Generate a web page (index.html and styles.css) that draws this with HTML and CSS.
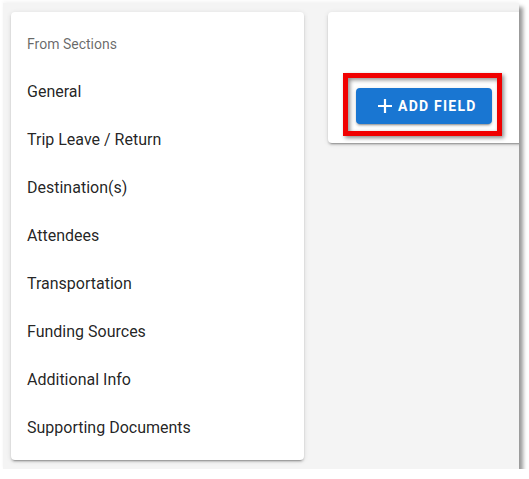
FILE: index.html
```html
<!DOCTYPE html>
<html>
<head>
<meta charset="utf-8">
<link rel="stylesheet" href="styles.css">
</head>
<body>
<div class="frame">
  <div class="card list-card">
    <div class="subheader">From Sections</div>
    <div class="item">General</div>
    <div class="item">Trip Leave / Return</div>
    <div class="item">Destination(s)</div>
    <div class="item">Attendees</div>
    <div class="item">Transportation</div>
    <div class="item">Funding Sources</div>
    <div class="item">Additional Info</div>
    <div class="item">Supporting Documents</div>
  </div>
  <div class="card action-card">
    <div class="highlight">
      <button class="btn">
        <svg class="plus" viewBox="0 0 16 16" width="16" height="16"><path d="M8 1v14M1 8h14" stroke="#fff" stroke-width="2.2" fill="none"/></svg>
        <span>Add Field</span>
      </button>
    </div>
  </div>
</div>
</body>
</html>
```
FILE: styles.css
```css
html, body {
  margin: 0;
  padding: 0;
  background: #ffffff;
}
body {
  padding: 3px 0 0 3px;
  font-family: Roboto, "Liberation Sans", sans-serif;
}
.frame {
  width: 508px;
  height: 457px;
  background: #f4f4f4;
  padding: 9px 0 0 8px;
  display: flex;
  align-items: flex-start;
  gap: 24px;
  overflow: hidden;
  box-shadow: 4px 4px 4px rgba(0,0,0,0.4), 0 -2px 3px rgba(0,0,0,0.04);
}
.card {
  background: #fff;
  border-radius: 4px;
  box-shadow: 0 3px 1px -2px rgba(0,0,0,.2), 0 2px 2px 0 rgba(0,0,0,.14), 0 1px 5px 0 rgba(0,0,0,.12);
}
.list-card {
  width: 293px;
  flex: none;
  padding: 8px 0;
}
.subheader {
  height: 48px;
  line-height: 48px;
  padding-left: 16px;
  font-size: 14px;
  color: rgba(0,0,0,.6);
}
.item {
  height: 48px;
  line-height: 48px;
  padding-left: 16px;
  font-size: 16px;
  color: rgba(0,0,0,.87);
}
.action-card {
  flex: none;
  width: 220px;
  padding: 61px 0 7px 15px;
  border-radius: 4px 0 0 4px;
}
.highlight {
  display: inline-block;
  border: 5px solid #f00000;
  padding: 10px 5px 7px 8px;
  box-shadow: 2px 2px 4px rgba(0,0,0,.45), inset 2px 2px 4px rgba(0,0,0,.45);
}
.btn {
  display: flex;
  align-items: center;
  justify-content: flex-start;
  gap: 5px;
  width: 136px;
  height: 36px;
  border: none;
  border-radius: 4px;
  background: #1976d2;
  color: #fff;
  font-family: Roboto, "Liberation Sans", sans-serif;
  font-weight: 700;
  font-size: 14px;
  letter-spacing: 1.25px;
  text-transform: uppercase;
  padding: 0 0 0 21px;
  box-shadow: 0 3px 1px -2px rgba(0,0,0,.2), 0 2px 2px 0 rgba(0,0,0,.14), 0 1px 5px 0 rgba(0,0,0,.12);
}
.plus {
  flex: none;
}
```
